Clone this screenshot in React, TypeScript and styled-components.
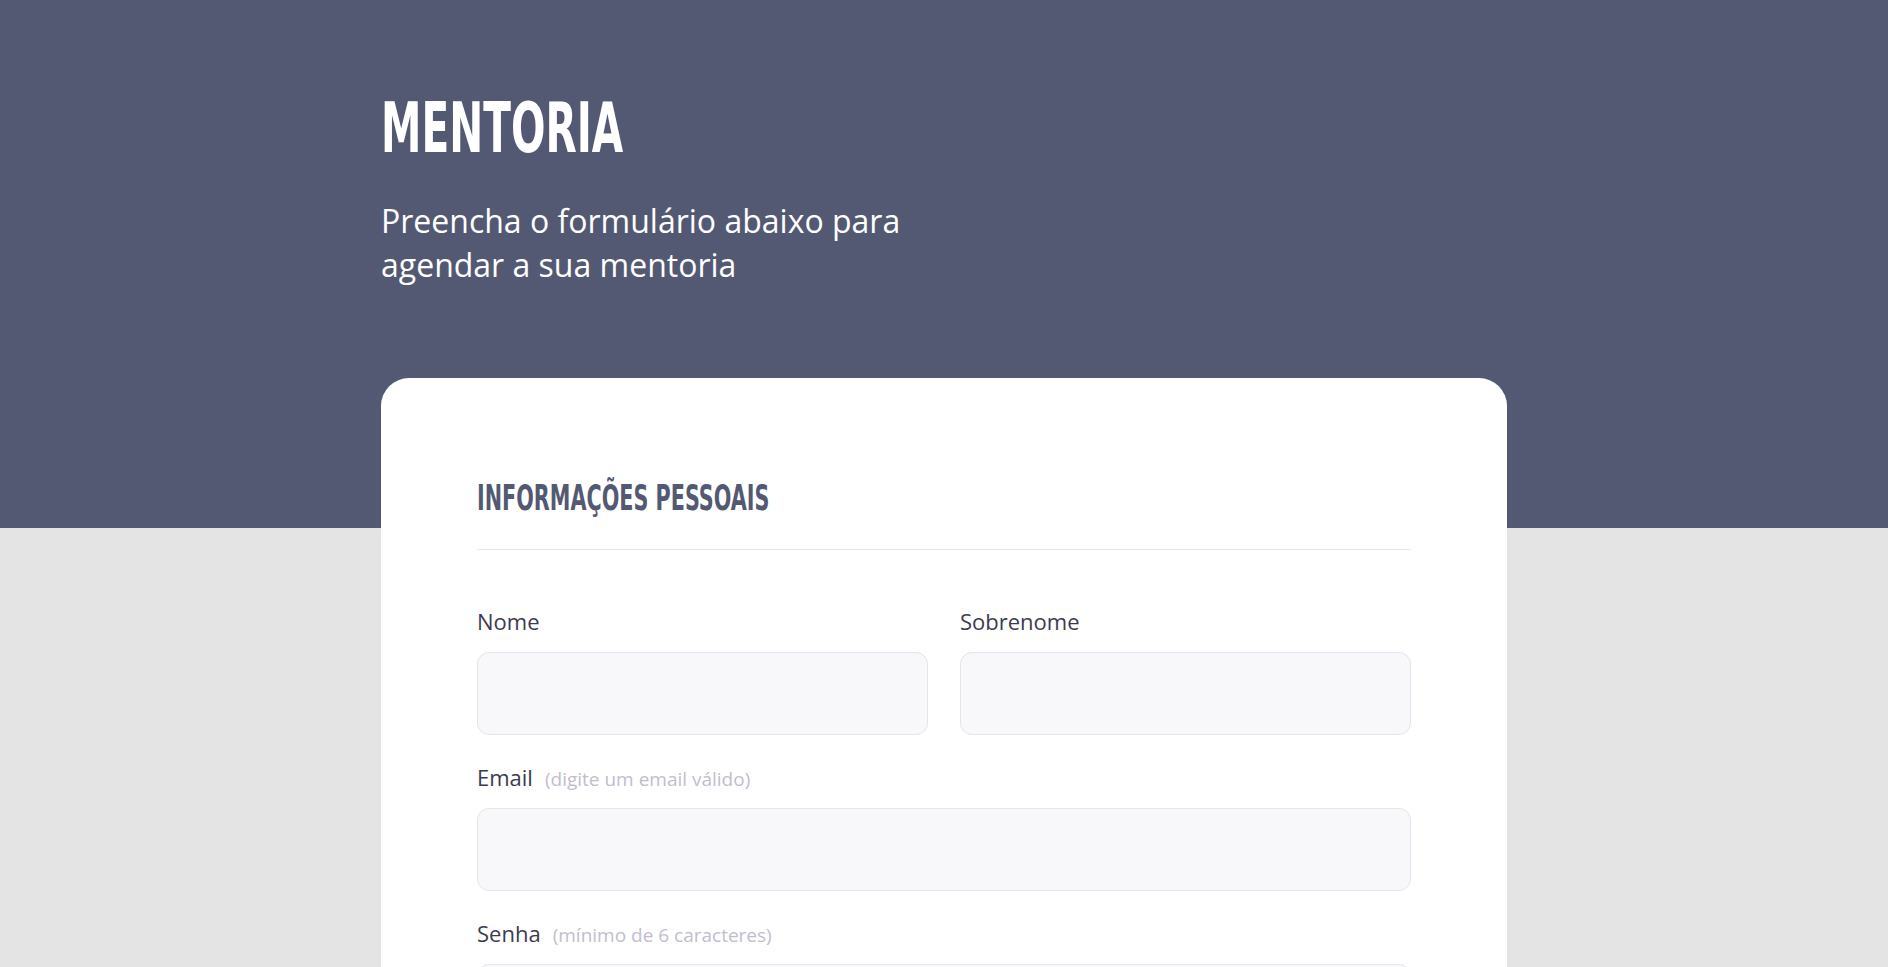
import React from "react";
import styled, { createGlobalStyle } from "styled-components";

const GlobalStyle = createGlobalStyle`
  html, body {
    margin: 0;
    padding: 0;
  }
  body {
    min-height: 100vh;
    background: linear-gradient(to bottom, #535973 0, #535973 528px, #e4e4e4 528px, #e4e4e4 100%);
    font-family: "Open Sans", "Liberation Sans", sans-serif;
  }
`;

const Page = styled.main`
  width: 1126px;
  margin: 0 auto;
  padding-top: 93px;
  padding-bottom: 80px;
`;

const Hero = styled.header`
  display: flex;
  flex-direction: column;
  align-items: flex-start;
`;

const Title = styled.h1`
  margin: 0;
  font-family: "Liberation Sans Narrow", "DejaVu Sans Condensed", "Liberation Sans", sans-serif;
  font-weight: 700;
  font-size: 70px;
  line-height: 70px;
  color: #ffffff;
  white-space: nowrap;
  transform: scaleX(0.645);
  transform-origin: left center;
`;

const Subtitle = styled.p`
  margin: 36px 0 0;
  max-width: 560px;
  font-family: "Open Sans", sans-serif;
  font-size: 32px;
  line-height: 44px;
  font-weight: 400;
  color: #ffffff;
`;

const Card = styled.section`
  margin-top: 91px;
  background: #ffffff;
  border-radius: 28px;
  padding: 102px 96px 96px;
`;

const SectionTitle = styled.h2`
  margin: 0;
  font-family: "Liberation Sans Narrow", "DejaVu Sans Condensed", "Liberation Sans", sans-serif;
  font-weight: 700;
  font-size: 36px;
  line-height: 36px;
  color: #535973;
  white-space: nowrap;
  transform: scaleX(0.64);
  transform-origin: left center;
`;

const Divider = styled.hr`
  margin: 33px 0 59px;
  border: 0;
  height: 1px;
  background: #e6e6ef;
`;

const Form = styled.form`
  display: flex;
  flex-direction: column;
  gap: 30px;
`;

const Row = styled.div`
  display: grid;
  grid-template-columns: 1fr 1fr;
  column-gap: 32px;
`;

const Field = styled.div`
  display: flex;
  flex-direction: column;
  gap: 19px;
`;

const Label = styled.label`
  display: block;
  height: 24px;
  font-family: "Open Sans", sans-serif;
  font-size: 22px;
  line-height: 24px;
  color: #3c3b4e;
  white-space: nowrap;
`;

const Hint = styled.span`
  margin-left: 12px;
  font-size: 19px;
  line-height: 1;
  color: #c2bdce;
`;

const Input = styled.input`
  box-sizing: border-box;
  width: 100%;
  height: 83px;
  padding: 0 20px;
  border: 1px solid #e4e3ee;
  border-radius: 12px;
  background: #f8f8fb;
  font-family: "Open Sans", sans-serif;
  font-size: 18px;
  color: #3c3b4e;
  outline: none;
`;

export default function App() {
  return (
    <>
      <GlobalStyle />
      <Page>
        <Hero>
          <Title>MENTORIA</Title>
          <Subtitle>Preencha o formulário abaixo para agendar a sua mentoria</Subtitle>
        </Hero>
        <Card>
          <SectionTitle>INFORMAÇÕES PESSOAIS</SectionTitle>
          <Divider />
          <Form onSubmit={(e) => e.preventDefault()}>
            <Row>
              <Field>
                <Label htmlFor="nome">Nome</Label>
                <Input id="nome" type="text" />
              </Field>
              <Field>
                <Label htmlFor="sobrenome">Sobrenome</Label>
                <Input id="sobrenome" type="text" />
              </Field>
            </Row>
            <Field>
              <Label htmlFor="email">
                Email<Hint>(digite um email válido)</Hint>
              </Label>
              <Input id="email" type="email" />
            </Field>
            <Field>
              <Label htmlFor="senha">
                Senha<Hint>(mínimo de 6 caracteres)</Hint>
              </Label>
              <Input id="senha" type="password" />
            </Field>
          </Form>
        </Card>
      </Page>
    </>
  );
}
